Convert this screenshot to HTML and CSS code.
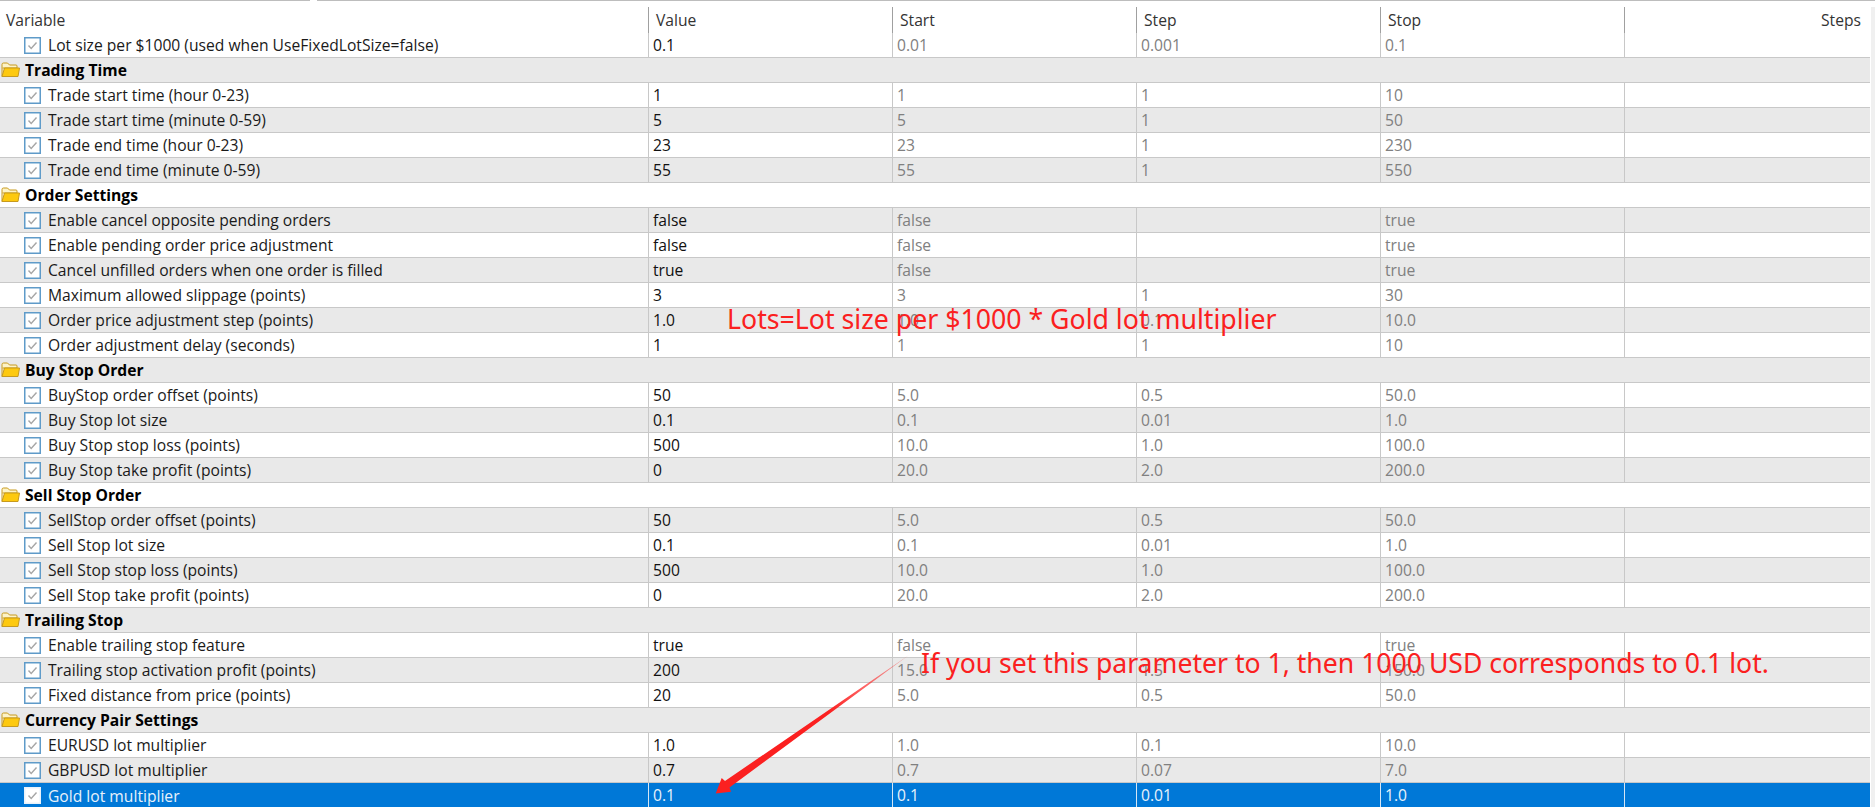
FILE: index.html
```html
<!DOCTYPE html>
<html lang="en">
<head>
<meta charset="utf-8">
<title>Inputs</title>
<link rel="stylesheet" href="styles.css">
</head>
<body>
<svg width="0" height="0" class="defs">
  <defs>
    <symbol id="check" viewBox="0 0 17 17">
      <rect x="0.75" y="0.75" width="15.5" height="15.5" fill="#fff" stroke="currentColor" stroke-width="1.5"/>
      <path d="M4.5 8.5 L7.2 11.5 L12.5 5.5" fill="none" stroke="#a6a6a6" stroke-width="1.4"/>
    </symbol>
    <symbol id="folder" viewBox="0 0 19 16">
      <path d="M1 14.5 V2.5 Q1 1 2.5 1 H6.5 L8.5 3 H15 Q16 3 16 4 V6 H1.5" fill="#fdf3c8" stroke="#c79a1e" stroke-width="1"/>
      <path d="M1 14.5 L3.5 6 H18.5 L17 14.5 Z" fill="#fdc90f" stroke="#c79a1e" stroke-width="1" stroke-linejoin="round"/>
    </symbol>
  </defs>
</svg>
<main class="table">
  <div class="top-line"><span></span><span></span></div>
  <div class="scrollbar"></div>
  <header class="row head">
    <div>Variable</div><div>Value</div><div>Start</div><div>Step</div><div>Stop</div><div class="right">Steps</div>
  </header>
  <section class="body">
    <div class="row"><div class="name"><svg class="check"><use href="#check"/></svg>Lot size per $1000 (used when UseFixedLotSize=false)</div><div class="val">0.1</div><div>0.01</div><div>0.001</div><div>0.1</div><div></div></div>
    <div class="row group"><svg class="folder"><use href="#folder"/></svg>Trading Time</div>
    <div class="row"><div class="name"><svg class="check"><use href="#check"/></svg>Trade start time (hour 0-23)</div><div class="val">1</div><div>1</div><div>1</div><div>10</div><div></div></div>
    <div class="row"><div class="name"><svg class="check"><use href="#check"/></svg>Trade start time (minute 0-59)</div><div class="val">5</div><div>5</div><div>1</div><div>50</div><div></div></div>
    <div class="row"><div class="name"><svg class="check"><use href="#check"/></svg>Trade end time (hour 0-23)</div><div class="val">23</div><div>23</div><div>1</div><div>230</div><div></div></div>
    <div class="row"><div class="name"><svg class="check"><use href="#check"/></svg>Trade end time (minute 0-59)</div><div class="val">55</div><div>55</div><div>1</div><div>550</div><div></div></div>
    <div class="row group"><svg class="folder"><use href="#folder"/></svg>Order Settings</div>
    <div class="row"><div class="name"><svg class="check"><use href="#check"/></svg>Enable cancel opposite pending orders</div><div class="val">false</div><div>false</div><div></div><div>true</div><div></div></div>
    <div class="row"><div class="name"><svg class="check"><use href="#check"/></svg>Enable pending order price adjustment</div><div class="val">false</div><div>false</div><div></div><div>true</div><div></div></div>
    <div class="row"><div class="name"><svg class="check"><use href="#check"/></svg>Cancel unfilled orders when one order is filled</div><div class="val">true</div><div>false</div><div></div><div>true</div><div></div></div>
    <div class="row"><div class="name"><svg class="check"><use href="#check"/></svg>Maximum allowed slippage (points)</div><div class="val">3</div><div>3</div><div>1</div><div>30</div><div></div></div>
    <div class="row"><div class="name"><svg class="check"><use href="#check"/></svg>Order price adjustment step (points)</div><div class="val">1.0</div><div>1.0</div><div>0.1</div><div>10.0</div><div></div></div>
    <div class="row"><div class="name"><svg class="check"><use href="#check"/></svg>Order adjustment delay (seconds)</div><div class="val">1</div><div>1</div><div>1</div><div>10</div><div></div></div>
    <div class="row group"><svg class="folder"><use href="#folder"/></svg>Buy Stop Order</div>
    <div class="row"><div class="name"><svg class="check"><use href="#check"/></svg>BuyStop order offset (points)</div><div class="val">50</div><div>5.0</div><div>0.5</div><div>50.0</div><div></div></div>
    <div class="row"><div class="name"><svg class="check"><use href="#check"/></svg>Buy Stop lot size</div><div class="val">0.1</div><div>0.1</div><div>0.01</div><div>1.0</div><div></div></div>
    <div class="row"><div class="name"><svg class="check"><use href="#check"/></svg>Buy Stop stop loss (points)</div><div class="val">500</div><div>10.0</div><div>1.0</div><div>100.0</div><div></div></div>
    <div class="row"><div class="name"><svg class="check"><use href="#check"/></svg>Buy Stop take profit (points)</div><div class="val">0</div><div>20.0</div><div>2.0</div><div>200.0</div><div></div></div>
    <div class="row group"><svg class="folder"><use href="#folder"/></svg>Sell Stop Order</div>
    <div class="row"><div class="name"><svg class="check"><use href="#check"/></svg>SellStop order offset (points)</div><div class="val">50</div><div>5.0</div><div>0.5</div><div>50.0</div><div></div></div>
    <div class="row"><div class="name"><svg class="check"><use href="#check"/></svg>Sell Stop lot size</div><div class="val">0.1</div><div>0.1</div><div>0.01</div><div>1.0</div><div></div></div>
    <div class="row"><div class="name"><svg class="check"><use href="#check"/></svg>Sell Stop stop loss (points)</div><div class="val">500</div><div>10.0</div><div>1.0</div><div>100.0</div><div></div></div>
    <div class="row"><div class="name"><svg class="check"><use href="#check"/></svg>Sell Stop take profit (points)</div><div class="val">0</div><div>20.0</div><div>2.0</div><div>200.0</div><div></div></div>
    <div class="row group"><svg class="folder"><use href="#folder"/></svg>Trailing Stop</div>
    <div class="row"><div class="name"><svg class="check"><use href="#check"/></svg>Enable trailing stop feature</div><div class="val">true</div><div>false</div><div></div><div>true</div><div></div></div>
    <div class="row"><div class="name"><svg class="check"><use href="#check"/></svg>Trailing stop activation profit (points)</div><div class="val">200</div><div>15.0</div><div>1.5</div><div>150.0</div><div></div></div>
    <div class="row"><div class="name"><svg class="check"><use href="#check"/></svg>Fixed distance from price (points)</div><div class="val">20</div><div>5.0</div><div>0.5</div><div>50.0</div><div></div></div>
    <div class="row group"><svg class="folder"><use href="#folder"/></svg>Currency Pair Settings</div>
    <div class="row"><div class="name"><svg class="check"><use href="#check"/></svg>EURUSD lot multiplier</div><div class="val">1.0</div><div>1.0</div><div>0.1</div><div>10.0</div><div></div></div>
    <div class="row"><div class="name"><svg class="check"><use href="#check"/></svg>GBPUSD lot multiplier</div><div class="val">0.7</div><div>0.7</div><div>0.07</div><div>7.0</div><div></div></div>
    <div class="row selected"><div class="name"><svg class="check"><use href="#check"/></svg>Gold lot multiplier</div><div class="val">0.1</div><div>0.1</div><div>0.01</div><div>1.0</div><div></div></div>
  </section>
  <p class="note note-lots">Lots=Lot size per $1000 * Gold lot multiplier</p>
  <p class="note note-param">If you set this parameter to 1, then 1000 USD corresponds to 0.1 lot.</p>
  <svg class="arrow" width="1875" height="807" viewBox="0 0 1875 807">
    <defs>
      <linearGradient id="fade" gradientUnits="userSpaceOnUse" x1="909" y1="655" x2="830" y2="715">
        <stop offset="0" stop-color="#ff2a2a" stop-opacity="0.35"/>
        <stop offset="1" stop-color="#fb2020"/>
      </linearGradient>
    </defs>
    <path d="M909 655 L725 781 L721.7 778 L715.7 793.5 L731 791.7 L729.5 787.5 Z" fill="url(#fade)"/>
  </svg>
</main>
</body>
</html>
```

FILE: styles.css
```css
html, body {
  margin: 0;
  padding: 0;
  background: #fff;
}
body {
  width: 1875px;
  height: 807px;
  overflow: hidden;
  font-family: "Open Sans", "Noto Sans", sans-serif;
  font-size: 15.65px;
  color: #1a1a1a;
}
.defs { position: absolute; }
.table {
  position: relative;
  width: 1875px;
  height: 807px;
  display: flex;
  flex-direction: column;
  overflow: hidden;
}
.top-line {
  height: 1px;
  display: flex;
  gap: 7px;
  margin-bottom: 6px;
  flex: none;
}
.top-line span { background: #bdbdbd; }
.top-line span:first-child { width: 310px; }
.top-line span:last-child { flex: 1; }
.scrollbar {
  position: absolute;
  top: 7px;
  right: 0;
  bottom: 0;
  width: 4px;
  background: #f0f0f0;
}
.row {
  display: grid;
  grid-template-columns: 648px 244px 244px 244px 244px 246px;
  width: 1870px;
  height: 25px;
  box-sizing: border-box;
  line-height: 24px;
  flex: none;
}
.row > div {
  padding-left: 4px;
  box-sizing: border-box;
  border-left: 1px solid #c8c8c8;
  white-space: nowrap;
  color: #808080;
}
.row > div.name {
  display: flex;
  align-items: center;
  padding-left: 24px;
  border-left: 0;
  color: #1a1a1a;
}
.row > div.val { color: #111; }
.head { height: 26px; line-height: 27px; }
.head > div {
  color: #333;
  height: 26px;
  padding-left: 7px;
  border-left-color: #a0a0a0;
}
.head > div:first-child { padding-left: 6px; border-left: 0; }
.head > div.right { text-align: right; padding-right: 9px; }
.body .row { border-bottom: 1px solid #c8c8c8; }
.body .row:nth-child(even) { background: #e9e9e9; }
.check {
  width: 17px;
  height: 17px;
  margin-right: 7px;
  flex: none;
  color: #5f9bc9;
}
.group {
  display: flex;
  align-items: center;
  font-weight: 700;
  color: #000;
  padding-left: 1px;
}
.folder {
  width: 19px;
  height: 16px;
  margin-right: 5px;
  flex: none;
}
.body .row.selected {
  background: #0078d7;
  border-bottom: 0;
}
.selected > div, .selected > div.name, .selected > div.val {
  color: #e8f2fb;
  border-left-color: #d5e6f5;
}
.selected .check { color: #e8f2fb; }
.note {
  position: absolute;
  margin: 0;
  color: #fb2020;
  font-family: "Noto Sans", sans-serif;
  line-height: 32px;
  white-space: nowrap;
}
.note-lots { left: 727px; top: 303px; font-size: 26.7px; }
.note-param { left: 921px; top: 647px; font-size: 26.6px; }
.arrow { position: absolute; left: 0; top: 0; pointer-events: none; }
```
